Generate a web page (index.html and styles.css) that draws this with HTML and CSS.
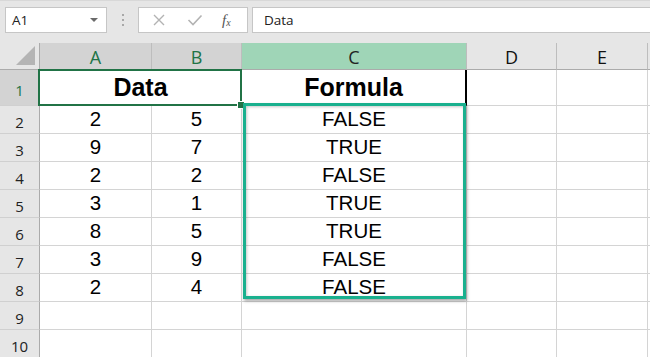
FILE: index.html
```html
<!DOCTYPE html>
<html>
<head>
<meta charset="utf-8">
<link rel="stylesheet" href="styles.css">
</head>
<body>
<div class="toolbar">
  <div class="namebox"><span class="nb-text">A1</span><span class="nb-arrow"></span></div>
  <div class="dots"><i></i><i></i><i></i></div>
  <div class="fxbox">
    <svg class="ic" width="14" height="14" viewBox="0 0 14 14"><path d="M2 2 L12 12 M12 2 L2 12" stroke="#b3b3b3" stroke-width="1.4" fill="none"/></svg>
    <svg class="ic" width="16" height="14" viewBox="0 0 16 14"><path d="M1.5 7 L6 11.5 L14.5 2.5" stroke="#b3b3b3" stroke-width="1.6" fill="none"/></svg>
    <span class="fx">f<sub>x</sub></span>
  </div>
  <div class="formula">Data</div>
</div>
<div class="sheet">
  <div class="corner"><span class="tri"></span></div>
  <div class="ch sel">A</div>
  <div class="ch sel">B</div>
  <div class="ch hl">C</div>
  <div class="ch">D</div>
  <div class="ch">E</div>
  <div class="ch last"></div>

  <div class="rh sel">1</div>
  <div class="c r1 span2">Data</div>
  <div class="c r1 c1">Formula</div>
  <div class="c"></div>
  <div class="c"></div>
  <div class="c last"></div>

  <div class="rh">2</div><div class="c">2</div><div class="c">5</div><div class="c">FALSE</div><div class="c"></div><div class="c"></div><div class="c last"></div>
  <div class="rh">3</div><div class="c">9</div><div class="c">7</div><div class="c">TRUE</div><div class="c"></div><div class="c"></div><div class="c last"></div>
  <div class="rh">4</div><div class="c">2</div><div class="c">2</div><div class="c">FALSE</div><div class="c"></div><div class="c"></div><div class="c last"></div>
  <div class="rh">5</div><div class="c">3</div><div class="c">1</div><div class="c">TRUE</div><div class="c"></div><div class="c"></div><div class="c last"></div>
  <div class="rh">6</div><div class="c">8</div><div class="c">5</div><div class="c">TRUE</div><div class="c"></div><div class="c"></div><div class="c last"></div>
  <div class="rh">7</div><div class="c">3</div><div class="c">9</div><div class="c">FALSE</div><div class="c"></div><div class="c"></div><div class="c last"></div>
  <div class="rh">8</div><div class="c">2</div><div class="c">4</div><div class="c">FALSE</div><div class="c"></div><div class="c"></div><div class="c last"></div>
  <div class="rh">9</div><div class="c"></div><div class="c"></div><div class="c"></div><div class="c"></div><div class="c"></div><div class="c last"></div>
  <div class="rh">10</div><div class="c"></div><div class="c"></div><div class="c"></div><div class="c"></div><div class="c"></div><div class="c last"></div>

  <div class="selbox"><span class="handle"></span></div>
  <div class="hlbox"></div>
</div>
</body>
</html>
```
FILE: styles.css
```css
* { box-sizing: border-box; }
html, body { margin: 0; padding: 0; }
body { width: 650px; height: 357px; overflow: hidden; background: #fff; font-family: "Liberation Sans", Arial, sans-serif; }

.toolbar {
  height: 43px;
  background: #e6e6e6;
  display: flex;
  align-items: flex-start;
  padding-top: 7px;
  padding-left: 5px;
  border-top: 1px solid #d8d8d8;
}
.namebox {
  width: 102px; height: 26px;
  margin-top: -1px;
  background: #fff;
  border: 1px solid #c6c6c6;
  display: flex; align-items: center; justify-content: space-between;
  padding: 0 8px 0 6px;
  font-family: "Open Sans", "Noto Sans", sans-serif;
  font-size: 13.5px; color: #222;
}
.nb-arrow {
  width: 0; height: 0;
  border-left: 4px solid transparent; border-right: 4px solid transparent;
  border-top: 4px solid #6a6a6a;
}
.dots { width: 30px; display: flex; flex-direction: column; align-items: center; gap: 3px; padding-top: 6px; margin-left: 1px; }
.dots i { display: block; width: 2px; height: 2px; background: #a8a8a8; }
.fxbox {
  width: 110px; height: 26px; margin-top: -1px;
  background: #fff; border: 1px solid #c6c6c6;
  display: flex; align-items: center;
  padding-left: 13px; gap: 21px;
}
.fxbox .ic { display: block; }
.fx { font-family: "Liberation Serif", serif; font-style: italic; font-size: 15px; color: #555; margin-left: -2px; }
.fx sub { font-size: 10px; vertical-align: -1px; }
.formula {
  flex: 1; height: 26px; margin-top: -1px; margin-left: 4px;
  background: #fff; border: 1px solid #c6c6c6; border-right: none;
  display: flex; align-items: center; padding-left: 11px;
  font-family: "Open Sans", "Noto Sans", sans-serif;
  font-size: 13.5px; color: #222;
}

.sheet {
  position: relative;
  display: grid;
  grid-template-columns: 40px 112px 90px 225px 90px 91px 2px;
  grid-template-rows: 27px 36px repeat(9, 28px);
}
.corner { background: #e6e6e6; border-right: 1px solid #ababab; border-bottom: 1px solid #ababab; position: relative; }
.tri {
  position: absolute; right: 4px; bottom: 4px;
  width: 0; height: 0;
  border-left: 19px solid transparent;
  border-bottom: 19px solid #b4b4b4;
}
.ch {
  background: #e6e6e6;
  border-right: 1px solid #bdbdbd;
  border-bottom: 1px solid #ababab;
  display: flex; align-items: center; justify-content: center;
  font-family: "Open Sans", "Noto Sans", sans-serif;
  font-size: 18px; color: #111;
  padding-top: 1px;
}
.ch.sel { background: #d3d3d3; color: #217346; }
.ch.hl { background: #9fd5b7; color: #222; }
.ch.last { border-right: none; }
.rh {
  background: #e6e6e6;
  border-right: 1px solid #ababab;
  border-bottom: 1px solid #d0d0d0;
  display: flex; align-items: center; justify-content: center;
  font-family: "Open Sans", "Noto Sans", sans-serif;
  font-size: 15px; color: #222;
  padding-top: 4px;
}
.rh.sel { background: #d3d3d3; color: #217346; }
.c {
  border-right: 1px solid #d4d4d4;
  border-bottom: 1px solid #d4d4d4;
  display: flex; align-items: flex-end; justify-content: center;
  font-size: 20.5px; line-height: 20px;
  padding-bottom: 4px;
  color: #000;
}
.c.last { border-right: none; }
.c.r1 { font-weight: bold; font-size: 25px; line-height: 24px; padding-bottom: 6px; }
.span2 { grid-column: span 2; }
.c1 { border-right: 2px solid #000; }

.selbox {
  position: absolute;
  left: 38px; top: 26px; width: 204px; height: 37px;
  border: 2px solid #217346;
}
.handle {
  position: absolute; right: -4px; bottom: -4px;
  width: 6px; height: 6px; background: #217346;
  outline: 1px solid #fff;
}
.hlbox {
  position: absolute;
  left: 243px; top: 60px; width: 223px; height: 196px;
  border: 3px solid #19b08e;
  box-shadow: 1px 2px 3px rgba(0,0,0,0.35), inset 1px 1px 3px rgba(0,0,0,0.22);
}
```
